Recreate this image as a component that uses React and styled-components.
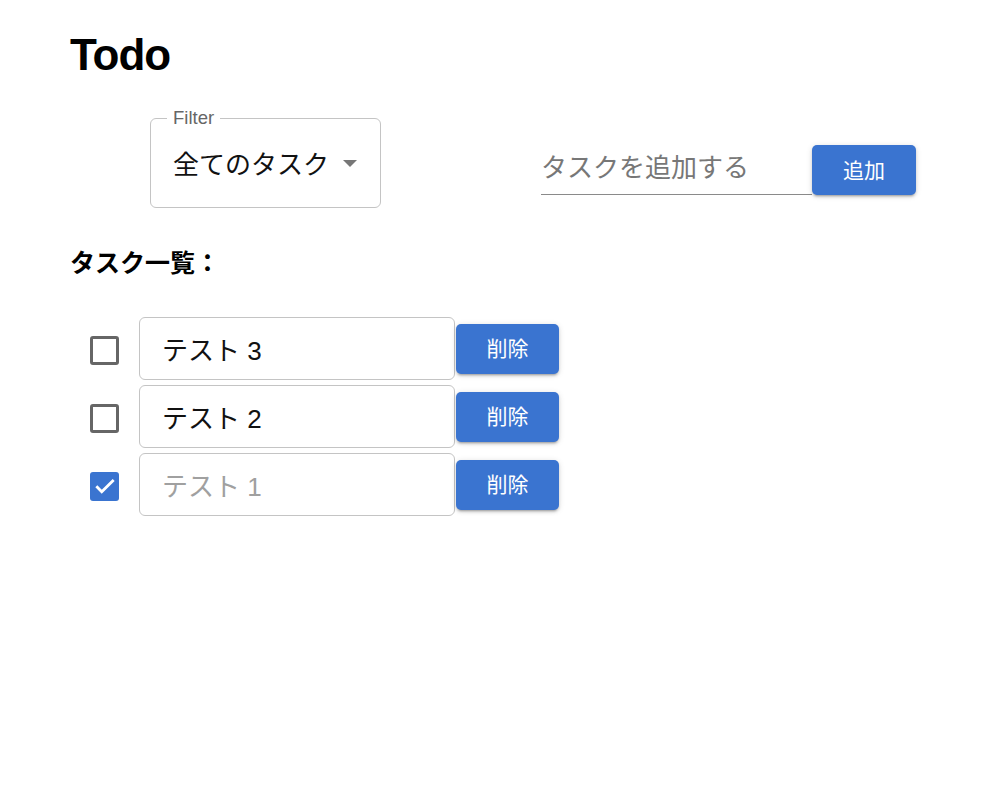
import React from "react"
import styled, { createGlobalStyle } from "styled-components"

const GlobalStyle = createGlobalStyle`
  body {
    margin: 0;
    background: #fff;
    font-family: "Liberation Sans", "Noto Sans CJK JP", sans-serif;
    color: rgba(0, 0, 0, 0.87);
  }
`

const BLUE = "#3a74d0"

const tasks = [
  { id: 3, text: "テスト 3", done: false },
  { id: 2, text: "テスト 2", done: false },
  { id: 1, text: "テスト 1", done: true },
]

function App() {
  return (
    <Wrapper>
      <GlobalStyle />
      <Title>Todo</Title>

      <Controls>
        <FilterBox>
          <FilterLabel>Filter</FilterLabel>
          <FilterValue>全てのタスク</FilterValue>
          <Arrow />
        </FilterBox>

        <AddGroup>
          <AddField>タスクを追加する</AddField>
          <BlueButton $wide>追加</BlueButton>
        </AddGroup>
      </Controls>

      <Heading>タスク一覧：</Heading>

      <List>
        {tasks.map((t) => (
          <Row key={t.id}>
            <Check $checked={t.done}>
              {t.done && (
                <svg width="26" height="26" viewBox="0 0 24 24">
                  <path d="M4 12.3l5 5L20 6.5" fill="none" stroke="#fff" strokeWidth="2.6" />
                </svg>
              )}
            </Check>
            <TaskField $disabled={t.done}>{t.text}</TaskField>
            <BlueButton>削除</BlueButton>
          </Row>
        ))}
      </List>
    </Wrapper>
  )
}

export const Wrapper = styled.div`
  padding: 29px 0 0 70px;
  width: 916px;
  box-sizing: border-box;
`

export const Title = styled.h1`
  margin: 0;
  font-size: 44px;
  line-height: 52px;
  font-weight: 700;
  letter-spacing: -1px;
  color: #000;
`

export const Controls = styled.div`
  display: flex;
  align-items: flex-start;
  justify-content: space-between;
  margin-top: 37px;
  padding-left: 80px;
`

export const FilterBox = styled.div`
  position: relative;
  width: 231px;
  height: 90px;
  box-sizing: border-box;
  border: 1.5px solid #c4c4c4;
  border-radius: 6px;
  display: flex;
  align-items: center;
  padding-left: 22px;
`

export const FilterLabel = styled.span`
  position: absolute;
  top: -12px;
  left: 16px;
  padding: 0 6px;
  background: #fff;
  font-size: 18.5px;
  line-height: 22px;
  color: #666;
`

export const FilterValue = styled.span`
  font-size: 26px;
  color: #111;
  margin-top: -2px;
`

export const Arrow = styled.span`
  position: absolute;
  right: 23px;
  top: 41px;
  width: 0;
  height: 0;
  border-left: 7px solid transparent;
  border-right: 7px solid transparent;
  border-top: 7px solid #777;
`

export const AddGroup = styled.div`
  display: flex;
  align-items: flex-end;
  margin-top: 27px;
`

export const AddField = styled.div`
  width: 271px;
  height: 48px;
  box-sizing: border-box;
  border-bottom: 1.5px solid #8a8a8a;
  font-size: 26px;
  line-height: 42px;
  color: #777;
`

export const BlueButton = styled.button`
  width: ${(p) => (p.$wide ? "104px" : "103px")};
  height: 50px;
  border: none;
  border-radius: 5px;
  background: ${BLUE};
  color: #fff;
  font-family: "Liberation Sans", "Noto Sans CJK JP", sans-serif;
  font-size: 21px;
  font-weight: 400;
  box-shadow: 0 3px 2px -2px rgba(0, 0, 0, 0.2), 0 2px 3px 0 rgba(0, 0, 0, 0.14),
    0 1px 6px 0 rgba(0, 0, 0, 0.12);
  padding: 0 0 3px;
`

export const Heading = styled.h2`
  margin: 37px 0 0;
  font-size: 25px;
  line-height: 36px;
  font-weight: 700;
  color: #000;
`

export const List = styled.div`
  margin-top: 36px;
  display: flex;
  flex-direction: column;
  gap: 5px;
`

export const Row = styled.div`
  display: flex;
  align-items: center;
  padding-left: 20px;
`

export const Check = styled.span`
  width: 29px;
  height: 29px;
  box-sizing: border-box;
  border-radius: 3px;
  border: ${(p) => (p.$checked ? "none" : "3px solid #666")};
  background: ${(p) => (p.$checked ? BLUE : "#fff")};
  display: flex;
  align-items: center;
  justify-content: center;
  margin-right: 20px;
  margin-top: 3px;
`

export const TaskField = styled.div`
  width: 316px;
  height: 63px;
  box-sizing: border-box;
  border: 1.5px solid #c4c4c4;
  border-radius: 6px;
  padding-left: 22px;
  display: flex;
  align-items: center;
  font-size: 26px;
  color: ${(p) => (p.$disabled ? "#a0a0a0" : "#111")};
  margin-right: 1px;
`

export default App
